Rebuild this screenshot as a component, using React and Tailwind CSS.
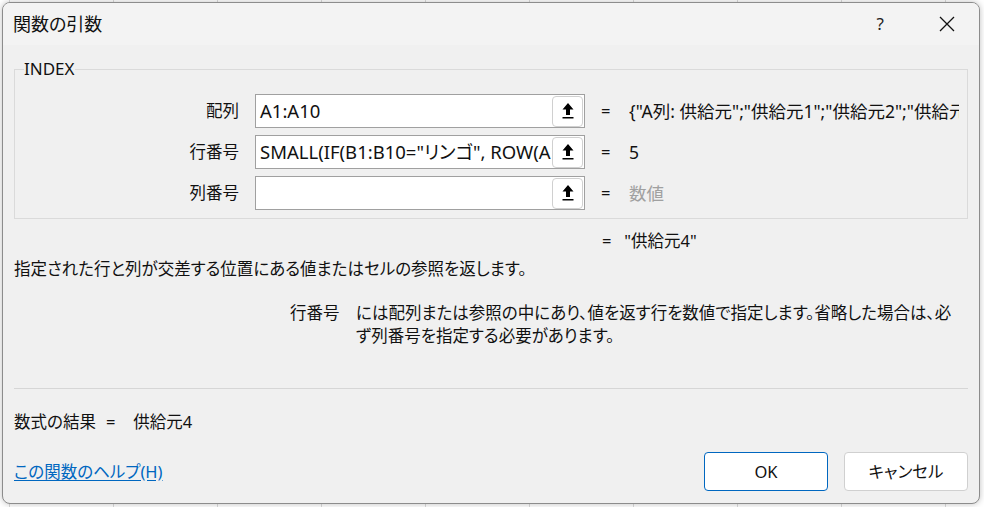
import React from 'react';

function UploadArrow() {
  return (
    <svg width="14" height="18" viewBox="0 0 14 18" fill="#000">
      <path d="M7 1 L12.5 7.5 H9 V13 H5 V7.5 H1.5 Z" />
      <rect x="1.5" y="15" width="11" height="1.5" />
    </svg>
  );
}

function ArgRow({ label, value, result, muted }) {
  return (
    <div className="flex items-center h-[34px]">
      <div className="w-[215px] text-right">{label}</div>
      <div className="ml-4 w-[330px] h-[34px] bg-white border border-[#a0a0a0] flex items-center">
        <div className="flex-1 min-w-0 overflow-hidden whitespace-nowrap pl-[4px] text-[18.5px]">{value}</div>
        <button className="shrink-0 w-[31px] h-[31px] mr-[1px] bg-white border border-[#d0d0d0] rounded-[4px] flex items-center justify-center">
          <UploadArrow />
        </button>
      </div>
      <div className="w-[44px] pl-[16px]">=</div>
      <div className={`w-[330px] overflow-hidden whitespace-nowrap text-[17.5px] ${muted ? 'text-[#a0a0a0]' : ''}`}>{result}</div>
    </div>
  );
}

export default function App() {
  return (
    <div className="w-[984px] h-[507px] bg-white bg-[linear-gradient(90deg,#dadada_1px,transparent_1px)] bg-size-[104px_100%] bg-position-[9px_0] pl-[2px] pt-[2px] pr-[4px] pb-[3px] font-['Noto_Sans','Noto_Sans_CJK_JP',sans-serif] [font-feature-settings:'palt'] text-[16.5px] text-[#111]">
      <div className="h-full flex flex-col bg-[#f0f0f0] border border-[#8c8c8c] rounded-[8px] shadow-[0_0_6px_rgba(0,0,0,0.25)] overflow-hidden">
        <div className="h-[42px] shrink-0 bg-[#f3f3f3] flex items-center pl-[10px]">
          <span className="text-[18px]">関数の引数</span>
          <span className="ml-auto text-[17px] text-[#222] mr-[55px]">?</span>
          <svg width="16" height="16" viewBox="0 0 16 16" className="mr-[24px]" stroke="#111" strokeWidth="1.3">
            <path d="M1 1 L15 15 M15 1 L1 15" />
          </svg>
        </div>
        <div className="flex-1 flex flex-col px-[11px] leading-[24px]">
          <fieldset className="mt-[12px] border border-[#dadada] pl-[9px] pr-2 pb-[8px]">
            <legend className="px-0 text-[17px]">INDEX</legend>
            <div className="mt-[13px] flex flex-col gap-[7px]">
              <ArgRow label="配列" value="A1:A10" result={'{"A列: 供給元";"供給元1";"供給元2";"供給元3";"供給元4"}'} />
              <ArgRow label="行番号" value={'SMALL(IF(B1:B10="リンゴ", ROW(A1:A10)), 2)'} result="5" />
              <ArgRow label="列番号" value="" result="数値" muted />
            </div>
          </fieldset>
          <div className="mt-[10px] pl-[588px]">=&nbsp;&nbsp;&nbsp;"供給元4"</div>
          <div className="mt-[4px]">指定された行と列が交差する位置にある値またはセルの参照を返します。</div>
          <div className="mt-[20px] flex pl-[276px] leading-[23px]">
            <div className="w-[66px] shrink-0">行番号</div>
            <div className="whitespace-nowrap">
              には配列または参照の中にあり、値を返す行を数値で指定します。省略した場合は、必
              <br />
              ず列番号を指定する必要があります。
            </div>
          </div>
          <div className="mt-[41px] border-t border-[#d6d6d6]"></div>
          <div className="mt-[21px] flex gap-[10px]">
            <span>数式の結果</span>
            <span>=</span>
            <span className="ml-[8px]">供給元4</span>
          </div>
          <div className="mt-[18px] flex items-center">
            <a href="#" className="text-[#0067c0] underline underline-offset-2">この関数のヘルプ(H)</a>
            <button className="ml-auto w-[124px] h-[39px] bg-white border border-[#0067c0] rounded-[4px]">OK</button>
            <button className="ml-[16px] w-[124px] h-[39px] bg-white border border-[#d0d0d0] rounded-[4px]">キャンセル</button>
          </div>
        </div>
      </div>
    </div>
  );
}
